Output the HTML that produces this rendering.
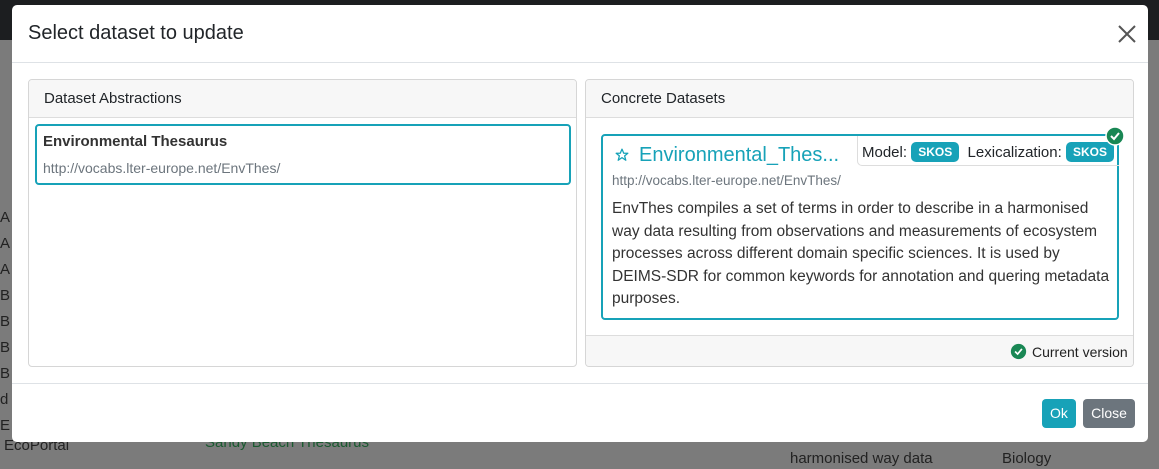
<!DOCTYPE html>
<html><head><style>
*{box-sizing:border-box}
body{margin:0;width:1159px;height:469px;overflow:hidden;font-family:"Liberation Sans",sans-serif;background:#7b7b7b;position:relative;color:#212529}
.top{position:absolute;left:0;top:0;width:1159px;height:40px;background:#1c1e20}
.bg{position:absolute;color:#222;font-size:15px}
.modal{position:absolute;left:12px;top:5px;width:1136px;height:437px;background:#fff;border-radius:5px}
.title{position:absolute;left:16px;top:17px;font-size:20px;color:#212529}
.x{position:absolute;left:1104px;top:18px}
.hl{position:absolute;left:0;width:1136px;height:1px;background:#dee2e6}
.card{position:absolute;top:74px;width:549px;height:288px;border:1px solid #d6d6d6;border-radius:4px;overflow:hidden}
.ch{height:38px;background:#f7f7f7;border-bottom:1px solid #ddd;padding:10px 15px;font-size:15px}
.item{position:absolute;left:6px;top:44px;width:536px;height:61px;border:2px solid #17a2b8;border-radius:4px;padding:7px 6px}
.item b{font-weight:bold;font-size:15px;display:block;color:#333}
.item span{display:block;font-size:14px;color:#6c757d;margin-top:10px}
.inner{position:absolute;left:15px;top:54px;width:518px;height:186px;border:2px solid #17a2b8;border-radius:4px}
.badge{display:inline-block;background:#17a2b8;color:#fff;font-size:12px;font-weight:bold;padding:3px 7px;border-radius:5px;vertical-align:1px}
.btn{position:absolute;top:394px;height:29px;border-radius:4px;color:#fff;font-size:14px;line-height:29px;text-align:center}
</style></head><body>
<div class="top"></div>
<div class="bg" style="left:0;top:205px;line-height:26px">A<br>A<br>A<br>B<br>B<br>B<br>B<br>d<br>E</div>
<div class="bg" style="left:4px;top:437px">EcoPortal</div>
<div class="bg" style="left:205px;top:434px;color:#1a5a30">Sandy Beach Thesaurus</div>
<div class="bg" style="left:790px;top:450px">harmonised way data</div>
<div class="bg" style="left:1002px;top:450px">Biology</div>
<div class="modal">
 <div class="title">Select dataset to update</div>
 <svg class="x" width="22" height="22" viewBox="0 0 22 22"><path d="M3 3L19 19M19 3L3 19" stroke="#555" stroke-width="2"/></svg>
 <div class="hl" style="top:57px"></div>
 <div class="card" style="left:16px">
  <div class="ch">Dataset Abstractions</div>
  <div class="item"><b>Environmental Thesaurus</b><span>http://vocabs.lter-europe.net/EnvThes/</span></div>
 </div>
 <div class="card" style="left:573px">
  <div class="ch">Concrete Datasets</div>
  <div class="inner">
   <svg style="position:absolute;left:12px;top:12px" width="14" height="14" viewBox="0 0 24 24"><path d="M12 2l3 7h7l-5.5 4.5 2 7.5-6.5-4.5-6.5 4.5 2-7.5L2 9h7z" fill="none" stroke="#17a2b8" stroke-width="2.2" stroke-linejoin="round"/></svg>
   <div style="position:absolute;left:36px;top:8px;font-size:20px;color:#17a2b8">Environmental_Thes...</div>
   <div style="position:absolute;left:254px;top:0;width:262px;height:30px;border-left:1px solid #ddd;border-bottom:1px solid #ddd;border-bottom-left-radius:5px;padding:6px 4px;font-size:15px;white-space:nowrap">Model: <span class="badge">SKOS</span>&nbsp; Lexicalization: <span class="badge">SKOS</span></div>
   <div style="position:absolute;left:9px;top:37px;font-size:13.5px;color:#6c757d">http://vocabs.lter-europe.net/EnvThes/</div>
   <div style="position:absolute;left:9px;top:62px;width:502px;font-size:15.5px;line-height:22.5px;color:#333">EnvThes compiles a set of terms in order to describe in a harmonised way data resulting from observations and measurements of ecosystem processes across different domain specific sciences. It is used by DEIMS-SDR for common keywords for annotation and quering metadata purposes.</div>
  </div>
  <svg style="position:absolute;left:519px;top:46px" width="20" height="20" viewBox="0 0 20 20"><circle cx="10" cy="10" r="9" fill="#198754" stroke="#fff" stroke-width="1.5"/><path d="M6 10l3 3 5-6" stroke="#fff" stroke-width="2" fill="none"/></svg>
  <div style="position:absolute;left:0;top:255px;width:549px;height:33px;background:#f7f7f7;border-top:1px solid #ddd"></div>
  <svg style="position:absolute;left:424px;top:263px" width="17" height="17" viewBox="0 0 20 20"><circle cx="10" cy="10" r="9" fill="#198754"/><path d="M6 10l3 3 5-6" stroke="#fff" stroke-width="2" fill="none"/></svg>
  <div style="position:absolute;left:446px;top:264px;font-size:14px;color:#222">Current version</div>
 </div>
 <div class="hl" style="top:378px"></div>
 <div class="btn" style="left:1030px;width:34px;background:#17a2b8">Ok</div>
 <div class="btn" style="left:1071px;width:52px;background:#6c757d">Close</div>
</div>
</body></html>
